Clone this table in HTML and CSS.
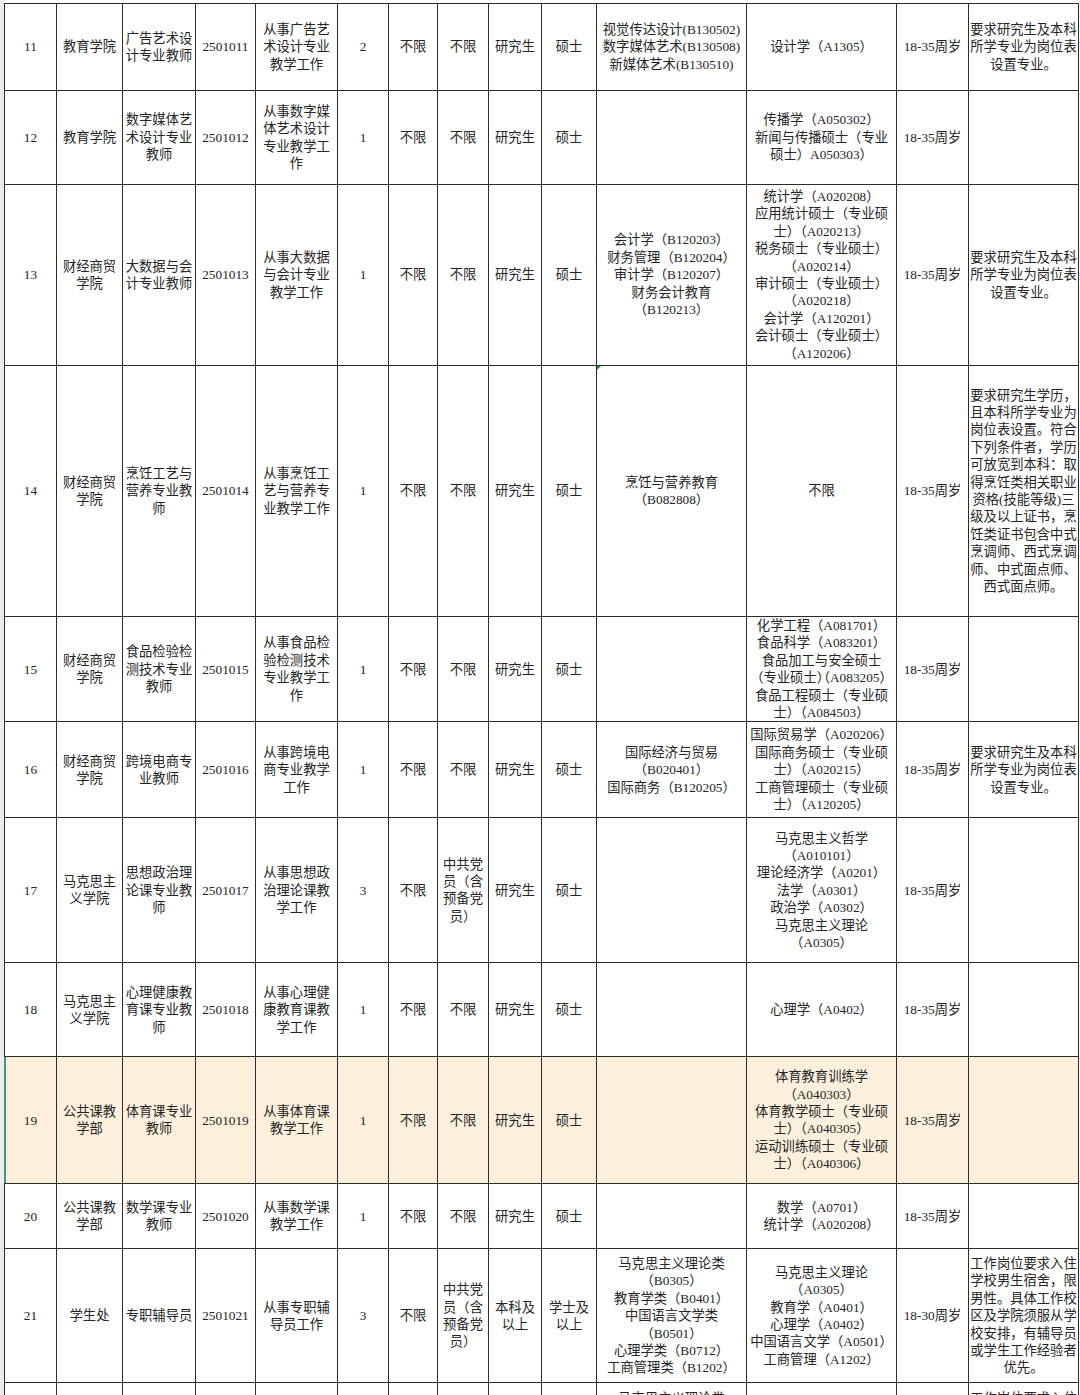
FILE: index.html
```html
<!DOCTYPE html>
<html lang="zh-CN">
<head>
<meta charset="utf-8">
<title>岗位表</title>
<link rel="stylesheet" href="styles.css">
</head>
<body>
<div class="sheet">
<table class="grid">
<colgroup>
<col class="w-no"><col class="w-dept"><col class="w-post"><col class="w-code"><col class="w-duty"><col class="w-num"><col class="w-any"><col class="w-pol"><col class="w-edu"><col class="w-deg"><col class="w-major"><col class="w-major"><col class="w-age"><col class="w-note">
</colgroup>
<tbody>
<tr class="r11">
<td>11</td><td>教育学院</td><td>广告艺术设<br>计专业教师</td><td>2501011</td><td>从事广告艺<br>术设计专业<br>教学工作</td><td>2</td><td>不限</td><td>不限</td><td>研究生</td><td>硕士</td>
<td>视觉传达设计(B130502)<br>数字媒体艺术(B130508)<br>新媒体艺术(B130510)</td>
<td>设计学（A1305）</td><td>18-35周岁</td><td>要求研究生及本科<br>所学专业为岗位表<br>设置专业。</td>
</tr>
<tr class="r12">
<td>12</td><td>教育学院</td><td>数字媒体艺<br>术设计专业<br>教师</td><td>2501012</td><td>从事数字媒<br>体艺术设计<br>专业教学工<br>作</td><td>1</td><td>不限</td><td>不限</td><td>研究生</td><td>硕士</td>
<td></td>
<td>传播学（A050302）<br>新闻与传播硕士（专业<br>硕士）A050303）</td><td>18-35周岁</td><td></td>
</tr>
<tr class="r13">
<td>13</td><td>财经商贸<br>学院</td><td>大数据与会<br>计专业教师</td><td>2501013</td><td>从事大数据<br>与会计专业<br>教学工作</td><td>1</td><td>不限</td><td>不限</td><td>研究生</td><td>硕士</td>
<td>会计学（B120203）<br>财务管理（B120204）<br>审计学（B120207）<br>财务会计教育<br>（B120213）</td>
<td>统计学（A020208）<br>应用统计硕士（专业硕<br>士）（A020213）<br>税务硕士（专业硕士）<br>（A020214）<br>审计硕士（专业硕士）<br>（A020218）<br>会计学（A120201）<br>会计硕士（专业硕士）<br>（A120206）</td>
<td>18-35周岁</td><td>要求研究生及本科<br>所学专业为岗位表<br>设置专业。</td>
</tr>
<tr class="r14">
<td>14</td><td>财经商贸<br>学院</td><td>烹饪工艺与<br>营养专业教<br>师</td><td>2501014</td><td>从事烹饪工<br>艺与营养专<br>业教学工作</td><td>1</td><td>不限</td><td>不限</td><td>研究生</td><td>硕士</td>
<td class="flag">烹饪与营养教育<br>（B082808）</td>
<td>不限</td><td>18-35周岁</td>
<td>要求研究生学历，<br>且本科所学专业为<br>岗位表设置。符合<br>下列条件者，学历<br>可放宽到本科：取<br>得烹饪类相关职业<br>资格(技能等级)三<br>级及以上证书，烹<br>饪类证书包含中式<br>烹调师、西式烹调<br>师、中式面点师、<br>西式面点师。</td>
</tr>
<tr class="r15">
<td>15</td><td>财经商贸<br>学院</td><td>食品检验检<br>测技术专业<br>教师</td><td>2501015</td><td>从事食品检<br>验检测技术<br>专业教学工<br>作</td><td>1</td><td>不限</td><td>不限</td><td>研究生</td><td>硕士</td>
<td></td>
<td>化学工程（A081701）<br>食品科学（A083201）<br>食品加工与安全硕士<br><span class="tight">（专业硕士）（A083205）</span><br>食品工程硕士（专业硕<br>士）（A084503）</td>
<td>18-35周岁</td><td></td>
</tr>
<tr class="r16">
<td>16</td><td>财经商贸<br>学院</td><td>跨境电商专<br>业教师</td><td>2501016</td><td>从事跨境电<br>商专业教学<br>工作</td><td>1</td><td>不限</td><td>不限</td><td>研究生</td><td>硕士</td>
<td>国际经济与贸易<br>（B020401）<br>国际商务（B120205）</td>
<td>国际贸易学（A020206）<br>国际商务硕士（专业硕<br>士）（A020215）<br>工商管理硕士（专业硕<br>士）（A120205）</td>
<td>18-35周岁</td><td>要求研究生及本科<br>所学专业为岗位表<br>设置专业。</td>
</tr>
<tr class="r17">
<td>17</td><td>马克思主<br>义学院</td><td>思想政治理<br>论课专业教<br>师</td><td>2501017</td><td>从事思想政<br>治理论课教<br>学工作</td><td>3</td><td>不限</td><td>中共党<br>员（含<br>预备党<br>员）</td><td>研究生</td><td>硕士</td>
<td></td>
<td>马克思主义哲学<br>（A010101）<br>理论经济学（A0201）<br>法学（A0301）<br>政治学（A0302）<br>马克思主义理论<br>（A0305）</td>
<td>18-35周岁</td><td></td>
</tr>
<tr class="r18">
<td>18</td><td>马克思主<br>义学院</td><td>心理健康教<br>育课专业教<br>师</td><td>2501018</td><td>从事心理健<br>康教育课教<br>学工作</td><td>1</td><td>不限</td><td>不限</td><td>研究生</td><td>硕士</td>
<td></td>
<td>心理学（A0402）</td>
<td>18-35周岁</td><td></td>
</tr>
<tr class="r19 selected">
<td class="sel-edge">19</td><td>公共课教<br>学部</td><td>体育课专业<br>教师</td><td>2501019</td><td>从事体育课<br>教学工作</td><td>1</td><td>不限</td><td>不限</td><td>研究生</td><td>硕士</td>
<td></td>
<td>体育教育训练学<br>（A040303）<br>体育教学硕士（专业硕<br>士）（A040305）<br>运动训练硕士（专业硕<br>士）（A040306）</td>
<td>18-35周岁</td><td></td>
</tr>
<tr class="r20">
<td>20</td><td>公共课教<br>学部</td><td>数学课专业<br>教师</td><td>2501020</td><td>从事数学课<br>教学工作</td><td>1</td><td>不限</td><td>不限</td><td>研究生</td><td>硕士</td>
<td></td>
<td>数学（A0701）<br>统计学（A020208）</td>
<td>18-35周岁</td><td></td>
</tr>
<tr class="r21">
<td>21</td><td>学生处</td><td>专职辅导员</td><td>2501021</td><td>从事专职辅<br>导员工作</td><td>3</td><td>不限</td><td>中共党<br>员（含<br>预备党<br>员）</td><td>本科及<br>以上</td><td>学士及<br>以上</td>
<td>马克思主义理论类<br>（B0305）<br>教育学类（B0401）<br>中国语言文学类<br>（B0501）<br>心理学类（B0712）<br>工商管理类（B1202）</td>
<td>马克思主义理论<br>（A0305）<br>教育学（A0401）<br>心理学（A0402）<br>中国语言文学（A0501）<br>工商管理（A1202）</td>
<td>18-30周岁</td>
<td>工作岗位要求入住<br>学校男生宿舍，限<br>男性。具体工作校<br>区及学院须服从学<br>校安排，有辅导员<br>或学生工作经验者<br>优先。</td>
</tr>
<tr class="r22">
<td></td><td></td><td></td><td></td><td></td><td></td><td></td><td></td><td></td><td></td>
<td class="top">马克思主义理论类</td>
<td></td><td></td>
<td class="top">工作岗位要求入住</td>
</tr>
</tbody>
</table>
</div>
</body>
</html>
```

FILE: styles.css
```css
html, body {
  margin: 0;
  padding: 0;
  background: #ffffff;
}

.sheet {
  width: 1080px;
  height: 1395px;
  overflow: hidden;
  box-sizing: border-box;
  padding-top: 3px;
  padding-left: 4px;
  background: linear-gradient(to right, #ececec 0, #ececec 4px, #ffffff 4px);
}

.grid {
  table-layout: fixed;
  border-collapse: collapse;
  width: 1075px;
  background: #ffffff;
  font-family: "Liberation Serif", "Noto Sans CJK SC", serif;
  font-size: 13.3px;
  line-height: 17.4px;
  color: #252525;
}

.grid td {
  border: 1px solid #2b2b2b;
  padding: 0;
  text-align: center;
  vertical-align: middle;
  white-space: nowrap;
  overflow: visible;
}

.w-no { width: 52px; }
.w-dept { width: 66px; }
.w-post { width: 73px; }
.w-code { width: 60px; }
.w-duty { width: 82px; }
.w-num { width: 51px; }
.w-any { width: 49px; }
.w-pol { width: 51px; }
.w-edu { width: 53px; }
.w-deg { width: 55px; }
.w-major { width: 150px; }
.w-age { width: 72px; }
.w-note { width: 110px; }

.r11 { height: 87px; }
.r12 { height: 94px; }
.r13 { height: 181px; }
.r14 { height: 251px; }
.r15 { height: 105px; }
.r16 { height: 96px; }
.r17 { height: 145px; }
.r18 { height: 94px; }
.r19 { height: 127px; }
.r20 { height: 65px; }
.r21 { height: 134px; }
.r22 { height: 134px; }

.r22 td.top {
  vertical-align: top;
  padding-top: 7px;
}

.selected td {
  background: #fcf0dd;
}

.grid td.sel-edge {
  position: relative;
}

.grid td.sel-edge::before {
  content: "";
  position: absolute;
  left: -1px;
  top: 0;
  bottom: 0;
  width: 2px;
  background: #3d9a6f;
}

.grid td.flag {
  position: relative;
}

.grid td.flag::before {
  content: "";
  position: absolute;
  left: 0;
  top: 0;
  width: 0;
  height: 0;
  border-top: 4px solid #1f8f3a;
  border-right: 4px solid transparent;
}

.tight {
  font-feature-settings: "halt";
}
```
